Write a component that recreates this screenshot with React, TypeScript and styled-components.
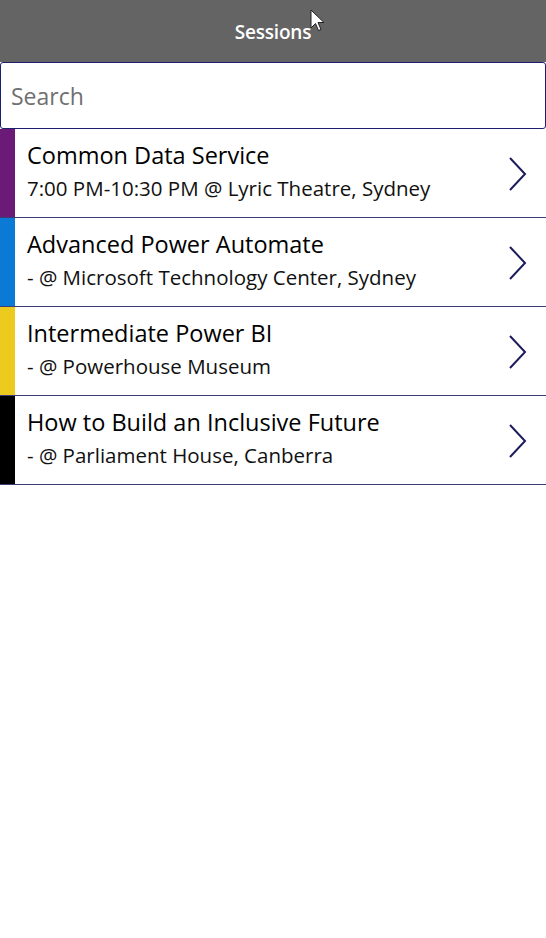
import React from 'react';
import styled, {createGlobalStyle} from 'styled-components';

const GlobalStyle = createGlobalStyle`
  html, body {
    margin: 0;
    padding: 0;
    background: #fff;
  }
  body {
    font-family: "Open Sans", "Noto Sans", sans-serif;
  }
`

type Session = {
    title: string;
    sub: string;
    color: string;
}

const sessions: Session[] = [
    {title: 'Common Data Service', sub: '7:00 PM-10:30 PM @ Lyric Theatre, Sydney', color: '#6b1a78'},
    {title: 'Advanced Power Automate', sub: '- @ Microsoft Technology Center, Sydney', color: '#0b7ad6'},
    {title: 'Intermediate Power BI', sub: '- @ Powerhouse Museum', color: '#ecca1e'},
    {title: 'How to Build an Inclusive Future', sub: '- @ Parliament House, Canberra', color: '#000000'},
]

export default function App() {
    return (
        <Screen>
            <GlobalStyle/>
            <Header>
                <HeaderTitle>Sessions</HeaderTitle>
                <Cursor width="16" height="24" viewBox="0 0 16 24">
                    <path d="M1 1 L1 19 L5.5 14.5 L8.5 21.5 L11 20.5 L8 13.5 L14 13.5 Z" fill="#fff" stroke="#222" strokeWidth="1"/>
                </Cursor>
            </Header>
            <SearchBox placeholder="Search"/>
            <List>
                {sessions.map((s) => (
                    <Row key={s.title}>
                        <ColorBar $color={s.color}/>
                        <RowText>
                            <Title>{s.title}</Title>
                            <Sub>{s.sub}</Sub>
                        </RowText>
                        <Chevron width="20" height="36" viewBox="0 0 20 36">
                            <polyline points="2,2 17,18 2,34" fill="none" stroke="#1c1c5c" strokeWidth="2"/>
                        </Chevron>
                    </Row>
                ))}
            </List>
        </Screen>
    );
}

const Screen = styled.div`
  width: 546px;
  min-height: 938px;
  background: #fff;
`

const Header = styled.header`
  position: relative;
  height: 62px;
  background: #646464;
  display: flex;
  align-items: center;
  justify-content: center;
`

const HeaderTitle = styled.h1`
  margin: 2px 0 0;
  color: #fff;
  font-size: 19px;
  font-weight: 600;
  letter-spacing: -0.2px;
`

const Cursor = styled.svg`
  position: absolute;
  left: 310px;
  top: 9px;
`

const SearchBox = styled.input`
  display: block;
  box-sizing: border-box;
  width: 546px;
  height: 67px;
  margin: 0;
  padding: 0 10px;
  border: 1px solid #1e1e6e;
  border-radius: 3px;
  font-family: "Open Sans", "Noto Sans", sans-serif;
  font-size: 23px;
  color: #333;
  outline: none;

  &::placeholder {
    color: #707070;
  }
`

const List = styled.div`
  display: flex;
  flex-direction: column;
`

const Row = styled.div`
  display: flex;
  align-items: stretch;
  height: 89px;
  box-sizing: border-box;
  border-bottom: 1px solid #3c3c78;
`

const ColorBar = styled.div<{ $color: string }>`
  width: 15px;
  flex-shrink: 0;
  background: ${(p) => p.$color};
`

const RowText = styled.div`
  flex: 1;
  display: flex;
  flex-direction: column;
  padding: 10px 0 0 12px;
  color: #000;
`

const Title = styled.div`
  font-size: 23.5px;
  font-weight: 500;
  line-height: 33px;
`

const Sub = styled.div`
  font-size: 20.5px;
  line-height: 32px;
  color: #111;
`

const Chevron = styled.svg`
  align-self: center;
  margin-right: 18px;
  margin-top: 2px;
`
